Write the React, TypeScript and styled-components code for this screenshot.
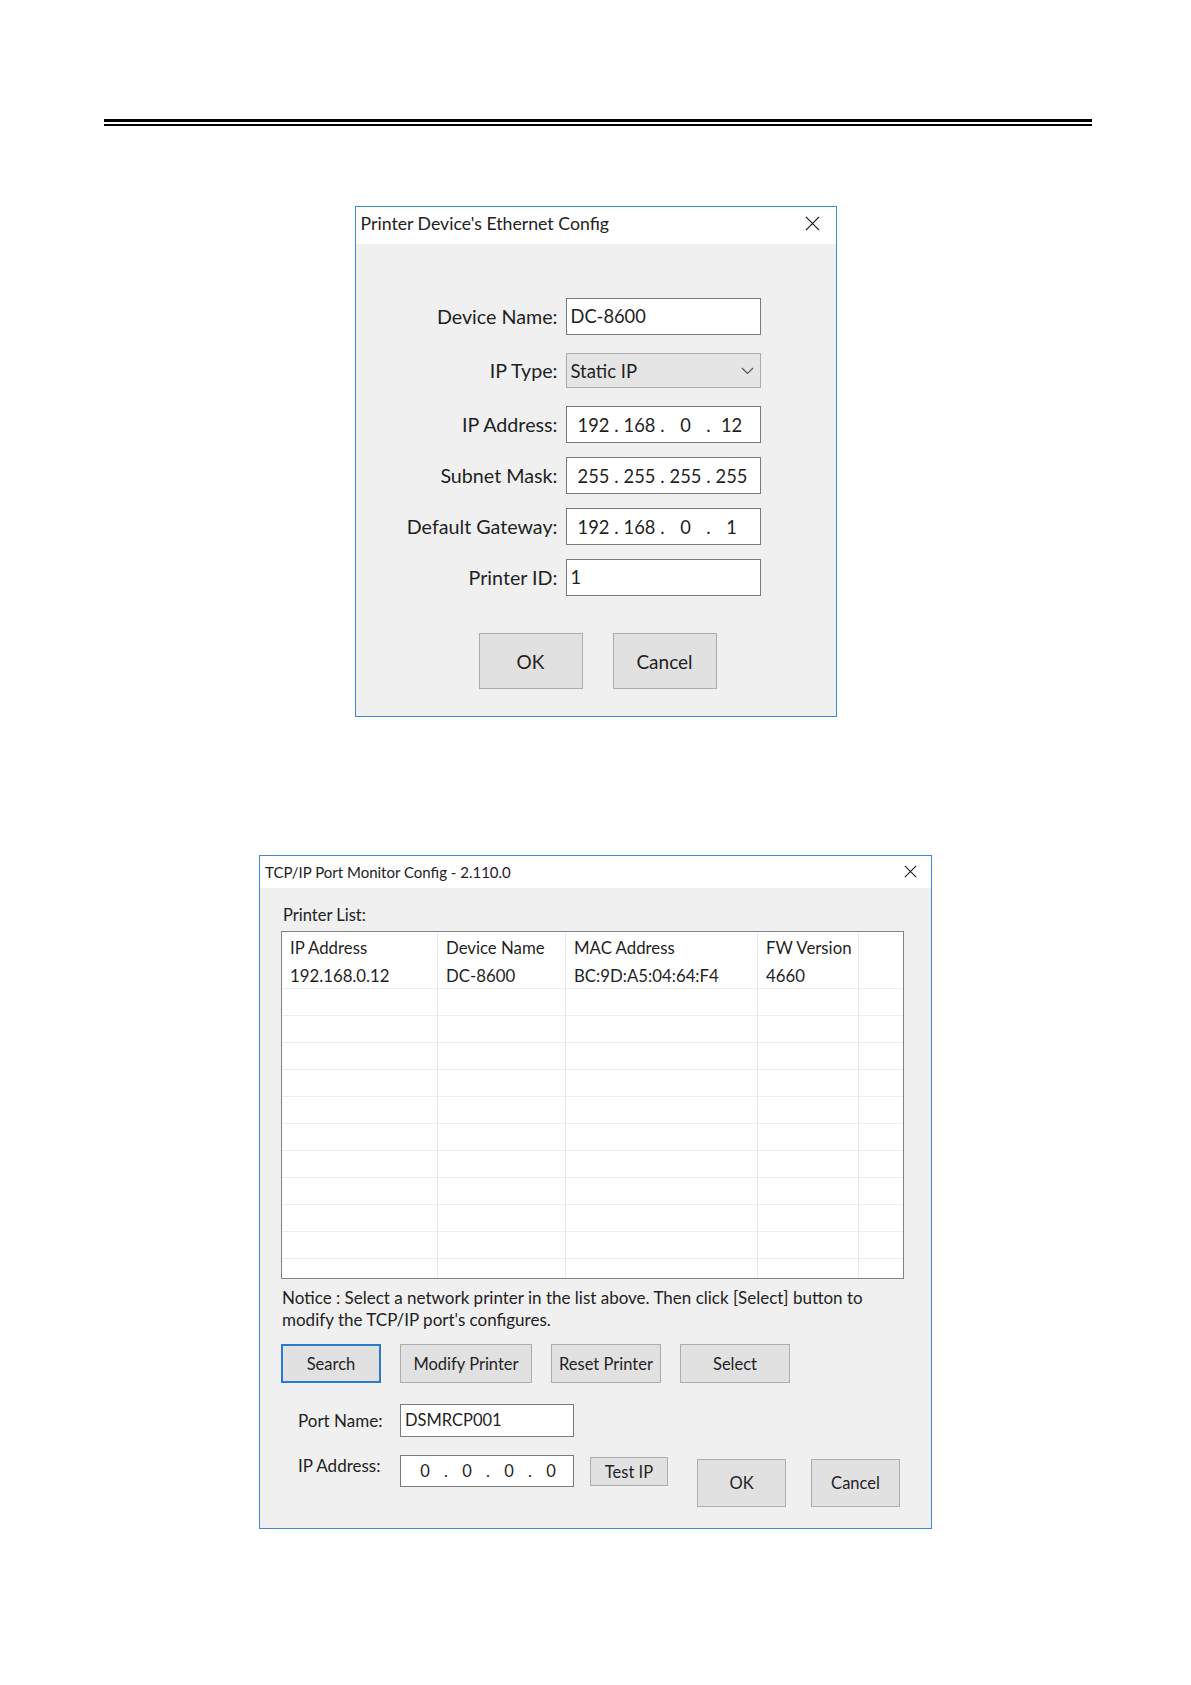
import React from "react";
import styled, { createGlobalStyle } from "styled-components";

const GlobalStyle = createGlobalStyle`
  html, body { margin: 0; padding: 0; background: #ffffff; }
  body { font-family: Lato, "Open Sans", "Noto Sans", sans-serif; color: #1f1f1f; }
  * { box-sizing: border-box; }
`;

const Page = styled.div`
  width: 1191px;
  min-height: 1685px;
  display: flex;
  flex-direction: column;
  align-items: center;
  padding-top: 119px;
`;

const HeaderRule = styled.div`
  width: 988px;
  height: 7px;
  margin-left: 4px;
  border-top: 3px solid #000;
  border-bottom: 2px solid #000;
`;

const Window = styled.section<{ $width: number; $top: number }>`
  width: ${(p) => p.$width}px;
  margin-top: ${(p) => p.$top}px;
  border: 1px solid #3c8ad6;
  background: #f0f0f0;
  display: flex;
  flex-direction: column;
`;

const TitleBar = styled.div<{ $height: number; $size: number; $padRight: number; $lift: number }>`
  height: ${(p) => p.$height}px;
  background: #ffffff;
  display: flex;
  align-items: center;
  justify-content: space-between;
  padding: 0 ${(p) => p.$padRight}px ${(p) => p.$lift}px 5px;
  font-size: ${(p) => p.$size}px;
  color: #222;
`;

const CloseIcon = ({ size }: { size: number }) => (
  <svg width={size} height={size} viewBox="0 0 16 16" fill="none">
    <path d="M1 1L15 15M15 1L1 15" stroke="#1a1a1a" strokeWidth="1.3" />
  </svg>
);

/* ---------- Dialog 1 ---------- */

const ConfigBody = styled.div`
  padding: 54px 0 27px 0;
  display: flex;
  flex-direction: column;
`;

const FormGrid = styled.div`
  display: grid;
  grid-template-columns: 202px 195px;
  column-gap: 8px;
  row-gap: 14px;
`;

const FieldLabel = styled.div`
  justify-self: end;
  align-self: center;
  font-size: 19.7px;
  color: #1f1f1f;
  white-space: nowrap;
`;

const TextBox = styled.div<{ $h: number; $size: number; $padLeft: number; $w?: number }>`
  height: ${(p) => p.$h}px;
  ${(p) => (p.$w ? `width: ${p.$w}px;` : "")}
  border: 1px solid #7a7a7a;
  background: #ffffff;
  display: flex;
  align-items: center;
  padding-left: ${(p) => p.$padLeft}px;
  padding-bottom: 2px;
  font-size: ${(p) => p.$size}px;
  color: #1f1f1f;
  white-space: nowrap;
`;

const SelectBox = styled.div`
  height: 35px;
  margin: 4px 0;
  border: 1px solid #acacac;
  background: #e5e5e5;
  display: flex;
  align-items: center;
  justify-content: space-between;
  padding: 0 6px 0 4px;
  font-size: 18.5px;
  color: #1f1f1f;
`;

const Chevron = () => (
  <svg width="13" height="8" viewBox="0 0 13 8" fill="none">
    <path d="M1 1L6.5 6.5L12 1" stroke="#555" strokeWidth="1.2" />
  </svg>
);

const IpBox = styled.div<{ $h: number; $padLeft: number; $size: number; $w?: number }>`
  height: ${(p) => p.$h}px;
  ${(p) => (p.$w ? `width: ${p.$w}px;` : "")}
  border: 1px solid #7a7a7a;
  background: #ffffff;
  display: flex;
  align-items: center;
  padding-left: ${(p) => p.$padLeft}px;
  font-size: ${(p) => p.$size}px;
  color: #1f1f1f;
`;

const IpCell = styled.span<{ $w: number }>`
  width: ${(p) => p.$w}px;
  text-align: center;
`;

const IpDot = styled.span`
  width: 8px;
  text-align: center;
`;

const ButtonRow = styled.div<{ $padLeft: number; $gap: number; $top: number }>`
  display: flex;
  gap: ${(p) => p.$gap}px;
  padding-left: ${(p) => p.$padLeft}px;
  margin-top: ${(p) => p.$top}px;
`;

const WinButton = styled.div<{ $w: number; $h: number; $size: number; $focused?: boolean }>`
  width: ${(p) => p.$w}px;
  height: ${(p) => p.$h}px;
  flex: none;
  background: #e1e1e1;
  border: ${(p) => (p.$focused ? "2px solid #2a7bd0" : "1px solid #adadad")};
  display: flex;
  align-items: center;
  justify-content: center;
  font-size: ${(p) => p.$size}px;
  color: #1f1f1f;
  white-space: nowrap;
`;

const IpValue = ({ parts, cell }: { parts: string[]; cell: number }) => (
  <>
    {parts.map((v, i) => (
      <React.Fragment key={i}>
        {i > 0 && <IpDot>.</IpDot>}
        <IpCell $w={cell}>{v}</IpCell>
      </React.Fragment>
    ))}
  </>
);

/* ---------- Dialog 2 ---------- */

const MonitorBody = styled.div`
  padding: 16px 27px 21px 21px;
  display: flex;
  flex-direction: column;
  font-size: 17px;
`;

const SectionLabel = styled.div`
  height: 22px;
  line-height: 22px;
  padding-left: 2px;
  margin-bottom: 5px;
  font-size: 16.5px;
  color: #222;
`;

const ListBox = styled.div`
  width: 623px;
  height: 348px;
  border: 1px solid #828282;
  background: #ffffff;
  overflow: hidden;
`;

const ListRow = styled.div<{ $header?: boolean }>`
  display: grid;
  grid-template-columns: 156px 128px 192px 101px 1fr;
  height: ${(p) => (p.$header ? 30 : 27)}px;
  border-bottom: ${(p) => (p.$header ? "none" : "1px solid #ededed")};
`;

const ListCell = styled.div`
  border-right: 1px solid #e8e8e8;
  padding-left: 8px;
  display: flex;
  align-items: center;
  font-size: 16.8px;
  color: #1f1f1f;
  white-space: nowrap;
  &:last-child { border-right: none; }
`;

const Notice = styled.div`
  margin-top: 8px;
  line-height: 22px;
  padding-left: 1px;
  color: #222;
`;

const FieldRow = styled.div<{ $top: number; $align: string }>`
  display: flex;
  align-items: ${(p) => p.$align};
  margin-top: ${(p) => p.$top}px;
  padding-left: 17px;
`;

const SmallLabel = styled.div`
  width: 102px;
  line-height: 22px;
  color: #222;
  white-space: nowrap;
`;

const Spaced = styled.div<{ $left: number; $top: number }>`
  margin-left: ${(p) => p.$left}px;
  margin-top: ${(p) => p.$top}px;
`;

const columns = ["IP Address", "Device Name", "MAC Address", "FW Version", ""];
const printers = [["192.168.0.12", "DC-8600", "BC:9D:A5:04:64:F4", "4660", ""]];
const emptyRows = 11;

export default function App() {
  return (
    <>
      <GlobalStyle />
      <Page>
        <HeaderRule />

        <Window $width={482} $top={80}>
          <TitleBar $height={37} $size={17.7} $padRight={16} $lift={4}>
            <span>Printer Device's Ethernet Config</span>
            <CloseIcon size={15} />
          </TitleBar>
          <ConfigBody>
            <FormGrid>
              <FieldLabel>Device Name:</FieldLabel>
              <TextBox $h={37} $size={18.3} $padLeft={4}>DC-8600</TextBox>

              <FieldLabel>IP Type:</FieldLabel>
              <SelectBox>
                <span>Static IP</span>
                <Chevron />
              </SelectBox>

              <FieldLabel>IP Address:</FieldLabel>
              <IpBox $h={37} $padLeft={8} $size={18.3}>
                <IpValue parts={["192", "168", "0", "12"]} cell={38} />
              </IpBox>

              <FieldLabel>Subnet Mask:</FieldLabel>
              <IpBox $h={37} $padLeft={8} $size={18.3}>
                <IpValue parts={["255", "255", "255", "255"]} cell={38} />
              </IpBox>

              <FieldLabel>Default Gateway:</FieldLabel>
              <IpBox $h={37} $padLeft={8} $size={18.3}>
                <IpValue parts={["192", "168", "0", "1"]} cell={38} />
              </IpBox>

              <FieldLabel>Printer ID:</FieldLabel>
              <TextBox $h={37} $size={18.3} $padLeft={4}>1</TextBox>
            </FormGrid>
            <ButtonRow $padLeft={123} $gap={30} $top={37}>
              <WinButton $w={104} $h={56} $size={19}>OK</WinButton>
              <WinButton $w={104} $h={56} $size={19}>Cancel</WinButton>
            </ButtonRow>
          </ConfigBody>
        </Window>

        <Window $width={673} $top={138}>
          <TitleBar $height={32} $size={15} $padRight={14} $lift={1}>
            <span>TCP/IP Port Monitor Config - 2.110.0</span>
            <CloseIcon size={13} />
          </TitleBar>
          <MonitorBody>
            <SectionLabel>Printer List:</SectionLabel>
            <ListBox>
              <ListRow $header>
                {columns.map((c, i) => (
                  <ListCell key={i}>{c}</ListCell>
                ))}
              </ListRow>
              {printers.map((r, i) => (
                <ListRow key={i}>
                  {r.map((c, j) => (
                    <ListCell key={j}>{c}</ListCell>
                  ))}
                </ListRow>
              ))}
              {Array.from({ length: emptyRows }).map((_, i) => (
                <ListRow key={"e" + i}>
                  {columns.map((_, j) => (
                    <ListCell key={j} />
                  ))}
                </ListRow>
              ))}
            </ListBox>
            <Notice>
              Notice : Select a network printer in the list above. Then click [Select] button to
              <br />
              modify the TCP/IP port's configures.
            </Notice>
            <ButtonRow $padLeft={0} $gap={19} $top={13}>
              <WinButton $w={100} $h={39} $size={16.5} $focused>Search</WinButton>
              <WinButton $w={132} $h={39} $size={16.5}>Modify Printer</WinButton>
              <WinButton $w={110} $h={39} $size={16.5}>Reset Printer</WinButton>
              <WinButton $w={110} $h={39} $size={16.5}>Select</WinButton>
            </ButtonRow>
            <FieldRow $top={21} $align="center">
              <SmallLabel>Port Name:</SmallLabel>
              <TextBox $h={33} $w={174} $size={16.5} $padLeft={4}>DSMRCP001</TextBox>
            </FieldRow>
            <FieldRow $top={18} $align="flex-start">
              <SmallLabel>IP Address:</SmallLabel>
              <IpBox $h={32} $w={174} $padLeft={7} $size={16.5}>
                <IpValue parts={["0", "0", "0", "0"]} cell={34} />
              </IpBox>
              <Spaced $left={16} $top={2}>
                <WinButton $w={78} $h={29} $size={16.5}>Test IP</WinButton>
              </Spaced>
              <Spaced $left={29} $top={4}>
                <WinButton $w={89} $h={48} $size={16.5}>OK</WinButton>
              </Spaced>
              <Spaced $left={25} $top={4}>
                <WinButton $w={89} $h={48} $size={16.5}>Cancel</WinButton>
              </Spaced>
            </FieldRow>
          </MonitorBody>
        </Window>
      </Page>
    </>
  );
}
